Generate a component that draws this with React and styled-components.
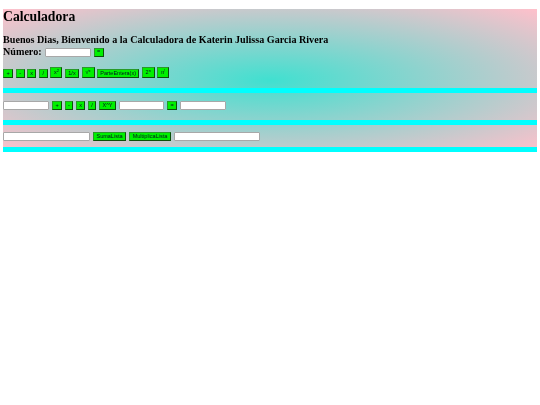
import React from 'react'
import styled, { createGlobalStyle } from 'styled-components'

const GlobalStyle = createGlobalStyle`
  html, body {
    margin: 0;
    padding: 0;
    background: #fff;
  }
  body {
    padding: 9px 3px 0;
    font-family: "Liberation Serif", "Times New Roman", serif;
    color: #000;
  }
`

const Page = styled.main`
  width: 534px;
  background: radial-gradient(turquoise, pink);
  filter: blur(0.25px);
`

const Section = styled.section`
  height: ${(p) => p.$height}px;
  border-bottom: 5px solid #00ffff;
  padding-top: ${(p) => p.$top}px;
  box-sizing: border-box;
`

const Title = styled.h2`
  margin: 0 0 10px;
  padding-top: 1px;
  font-size: 13.7px;
  line-height: 14px;
  font-weight: bold;
`

const Greeting = styled.h3`
  margin: 0;
  font-size: 10.15px;
  line-height: 12px;
  font-weight: bold;
`

const NumberRow = styled.div`
  display: flex;
  align-items: center;
  gap: 3px;
  font-size: 10.15px;
  line-height: 12px;
  font-weight: bold;
`

const Row = styled.div`
  display: flex;
  align-items: ${(p) => p.$align || 'center'};
  gap: ${(p) => p.$gap || 3}px;
  margin-top: ${(p) => p.$mt || 0}px;
`

const Field = styled.input`
  width: ${(p) => p.$w || 46}px;
  height: 9px;
  padding: 0;
  box-sizing: border-box;
  background: #fff;
  border: 1px solid #a8a8a8;
  border-radius: 1px;
  flex: none;
`

const Key = styled.button`
  width: ${(p) => p.$w || 10}px;
  height: ${(p) => p.$h || 9}px;
  padding: 0;
  box-sizing: border-box;
  background: #00f000;
  border: 1px solid;
  border-color: #289a28 #0a500a #0a500a #289a28;
  color: #012;
  font-family: "Liberation Sans", Arial, sans-serif;
  font-size: 5.5px;
  line-height: 1;
  flex: none;
  sup {
    font-size: 4px;
    vertical-align: 2px;
    line-height: 0;
  }
`

export default function App() {
  return (
    <>
      <GlobalStyle />
      <Page>
        <Section $height={84} $top={0}>
          <Title>Calculadora</Title>
          <Greeting>Buenos Dias, Bienvenido a la Calculadora de Katerin Julissa Garcia Rivera</Greeting>
          <NumberRow>
            Número:
            <Field />
            <Key>=</Key>
          </NumberRow>
          <Row $mt={9} $gap={2.6} $align="flex-end">
            <Key>+</Key>
            <Key $w={9}>-</Key>
            <Key $w={9}>x</Key>
            <Key $w={9}>/</Key>
            <Key $w={12} $h={11}>x<sup>2</sup></Key>
            <Key $w={14}>1/x</Key>
            <Key $w={13} $h={11}>√<sup>x</sup></Key>
            <Key $w={42}>ParteEntera(x)</Key>
            <Key $w={13} $h={11}>2<sup>n</sup></Key>
            <Key $w={12} $h={11}>n<sup>!</sup></Key>
          </Row>
        </Section>
        <Section $height={32} $top={8}>
          <Row>
            <Field />
            <Key>+</Key>
            <Key $w={8}>-</Key>
            <Key $w={9}>x</Key>
            <Key $w={8}>/</Key>
            <Key $w={17}>X^Y</Key>
            <Field $w={45} />
            <Key>=</Key>
            <Field />
          </Row>
        </Section>
        <Section $height={27} $top={7}>
          <Row>
            <Field $w={87} />
            <Key $w={33}>SumaLista</Key>
            <Key $w={42}>MultiplicaLista</Key>
            <Field $w={86} />
          </Row>
        </Section>
      </Page>
    </>
  )
}
